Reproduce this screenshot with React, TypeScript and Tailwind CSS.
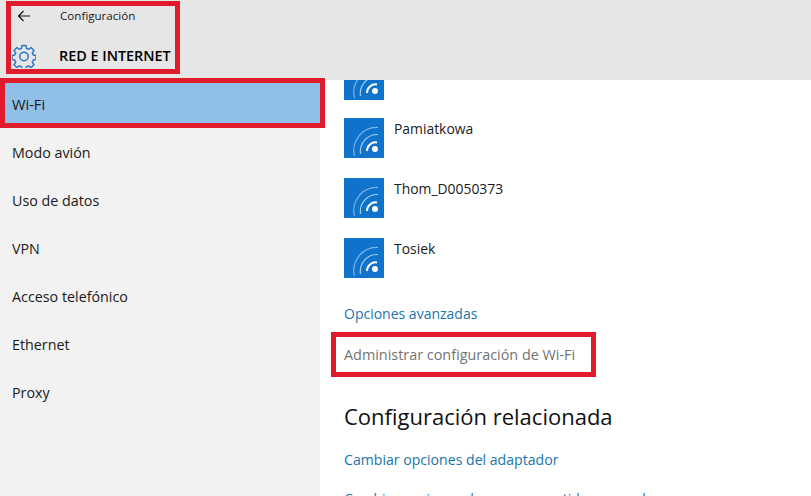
const font = { fontFamily: '"Open Sans", "Noto Sans", sans-serif' };

function Wifi() {
  return (
    <div className="w-10 h-10 bg-[#0f73cc] shrink-0">
      <svg viewBox="0 0 40 40" className="w-10 h-10" fill="none" strokeLinecap="butt">
        <circle cx="31" cy="31" r="3" fill="#fff" />
        <path d="M23 33 A8.5 8.5 0 0 1 33 24.5" stroke="#fff" strokeWidth="2" />
        <path d="M16.5 36 A17 17 0 0 1 34 16.5" stroke="#a4d0f4" strokeWidth="1.2" />
        <path d="M10.5 38 A23 23 0 0 1 34 9.5" stroke="#78b6ec" strokeWidth="1.2" />
      </svg>
    </div>
  );
}

function Gear() {
  return (
    <svg viewBox="0 0 26 26" className="w-[24px] h-[24px]" fill="none" stroke="#2a78c4" strokeWidth="1.6" strokeLinejoin="round">
      <path d="M10.8 1.6h4.4l.5 3.1 2.4 1 2.6-1.8 3.1 3.1-1.8 2.6 1 2.4 3 .5v4.4l-3 .5-1 2.4 1.8 2.6-3.1 3.1-2.6-1.8-2.4 1-.5 3.1h-4.4l-.5-3.1-2.4-1-2.6 1.8-3.1-3.1 1.8-2.6-1-2.4-3-.5v-4.4l3-.5 1-2.4-1.8-2.6 3.1-3.1 2.6 1.8 2.4-1z" />
      <circle cx="13" cy="13.5" r="4.6" />
    </svg>
  );
}

const items = ["Modo avión", "Uso de datos", "VPN", "Acceso telefónico", "Ethernet", "Proxy"];
const networks = ["Pamiatkowa", "Thom_D0050373", "Tosiek"];

export default function App() {
  return (
    <div style={font} className="relative w-[811px] h-[496px] overflow-hidden bg-white text-[#1a1a1a]">
      <header className="h-[80px] bg-[#e6e6e6] flex flex-col">
        <div className="flex items-center h-[32px]">
          <svg viewBox="0 0 16 16" className="w-4 h-4 ml-4 text-[#111]" fill="none" stroke="currentColor" strokeWidth="1.2">
            <path d="M14 8H2.5M7.5 3 2.5 8l5 5" />
          </svg>
          <span className="ml-[28px] text-[11.6px]">Configuración</span>
        </div>
        <div className="flex items-center h-[48px] ml-[12px]">
          <Gear />
          <span className="ml-[23px] text-[14.4px] font-semibold text-black">RED E INTERNET</span>
        </div>
      </header>
      <div className="flex h-[416px]">
        <nav className="w-[320px] bg-[#f2f2f2] shrink-0">
          <div className="h-[48px] bg-[#90c0e8] flex items-center px-3 pt-px text-[14.6px]">Wi-Fi</div>
          {items.map((i) => (
            <div key={i} className="h-[48px] flex items-center px-3 pt-px text-[14.3px]">{i}</div>
          ))}
        </nav>
        <main className="flex-1 pl-6 overflow-hidden text-[14px]">
          <div className="h-[20px] w-10 bg-[#0f73cc] overflow-hidden relative">
            <div className="-mt-5"><Wifi /></div>
          </div>
          <div className="mt-[18px] flex flex-col gap-5">
            {networks.map((n) => (
              <div key={n} className="flex gap-[10px] h-10">
                <Wifi />
                <span className="leading-[20px] pt-px text-[13.9px]">{n}</span>
              </div>
            ))}
          </div>
          <div className="mt-[26px] text-[#1a75a8] leading-[20px]">Opciones avanzadas</div>
          <div className="mt-[21px] text-[#737373] leading-[20px] text-[14.4px]">Administrar configuración de Wi-Fi</div>
          <div className="mt-[36px] text-[#111] text-[22px] leading-[30px]">Configuración relacionada</div>
          <div className="mt-[19px] text-[#1a75a8] leading-[20px] text-[14.1px]">Cambiar opciones del adaptador</div>
          <div className="mt-[19px] text-[#1a75a8] leading-[20px] whitespace-nowrap">Cambiar opciones de uso compartido avanzado</div>
        </main>
      </div>
      <div className="absolute left-[6px] top-px w-[174px] h-[73px] border-[5px] border-[#e01c2c]" />
      <div className="absolute left-0 top-[78px] w-[325px] h-[50px] border-[5px] border-[#e01c2c]" />
      <div className="absolute left-[331px] top-[332px] w-[265px] h-[45px] border-[5px] border-[#e01c2c]" />
    </div>
  );
}
